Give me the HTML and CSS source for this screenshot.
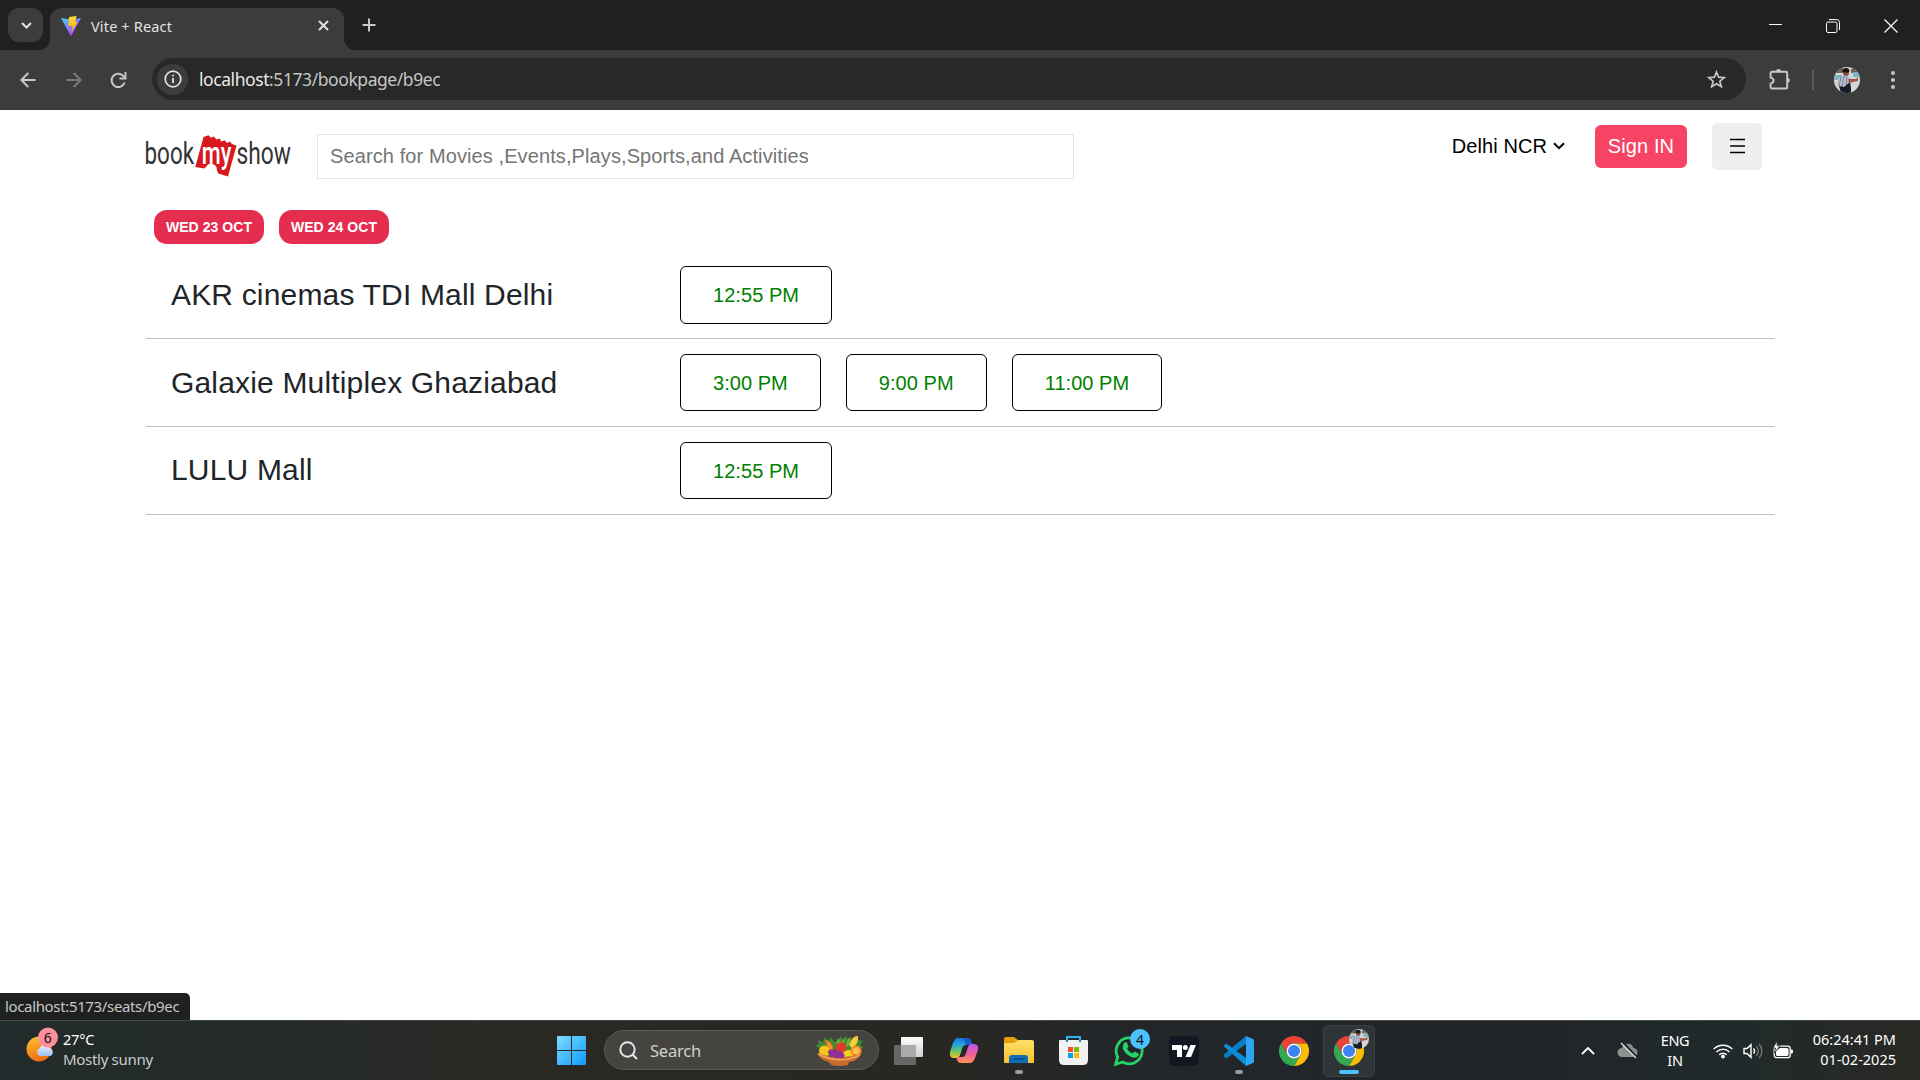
FILE: index.html
```html
<!DOCTYPE html>
<html lang="en">
<head>
<meta charset="utf-8">
<title>Vite + React</title>
<link rel="stylesheet" href="styles.css">
</head>
<body>
<svg class="defs" width="0" height="0" aria-hidden="true">
  <defs>
    <linearGradient id="sky" x1="0" y1="0" x2="1" y2="1"><stop offset="0" stop-color="#7ddcff"/><stop offset="1" stop-color="#0f9bff"/></linearGradient>
    <linearGradient id="vite" x1="0" y1="0" x2=".8" y2="1"><stop offset="0" stop-color="#41d1ff"/><stop offset="1" stop-color="#bd34fe"/></linearGradient>
    <linearGradient id="bolt" x1="0" y1="0" x2="0" y2="1"><stop offset="0" stop-color="#ffdd35"/><stop offset="1" stop-color="#ffa800"/></linearGradient>
    <linearGradient id="sun" x1=".2" y1="0" x2=".5" y2="1"><stop offset="0" stop-color="#fbc02f"/><stop offset="1" stop-color="#ee6a12"/></linearGradient>
    <linearGradient id="cloud" x1="0" y1="0" x2="0" y2="1"><stop offset="0" stop-color="#eaf2ff"/><stop offset="1" stop-color="#9dbcf0"/></linearGradient>
    <linearGradient id="folder" x1="0" y1="0" x2="0" y2="1"><stop offset="0" stop-color="#ffdf6b"/><stop offset="1" stop-color="#f9c12d"/></linearGradient>
    <linearGradient id="copA" x1="0" y1="0" x2="0" y2="1"><stop offset="0" stop-color="#1b78e8"/><stop offset=".35" stop-color="#26a8d8"/><stop offset=".7" stop-color="#7cc653"/><stop offset="1" stop-color="#f6c52c"/></linearGradient>
    <linearGradient id="copB" x1="0" y1="0" x2="0" y2="1"><stop offset="0" stop-color="#b35df0"/><stop offset=".5" stop-color="#ee5a9c"/><stop offset="1" stop-color="#ff9552"/></linearGradient>
    <linearGradient id="pane" x1="0" y1="0" x2="0" y2="1"><stop offset="0" stop-color="#fff"/><stop offset="1" stop-color="#cfcfcf"/></linearGradient>
    <symbol id="chrome" viewBox="0 0 48 48">
      <path fill="#ea4335" d="M24 0a24 24 0 0 1 20.800 12H24a12 12 0 0 0-10.400 18L3.200 12A24 24 0 0 1 24 0z"/>
      <path fill="#fbbc04" d="M44.800 12A24 24 0 0 1 24 48l10.400-18A12 12 0 0 0 24 12z"/>
      <path fill="#34a853" d="M3.200 12l10.400 18a12 12 0 0 0 20.800 0L24 48A24 24 0 0 1 3.200 12z"/>
      <circle cx="24" cy="24" r="12" fill="#fff"/><circle cx="24" cy="24" r="9.600" fill="#3b82f3"/>
    </symbol>
    <symbol id="face" viewBox="0 0 26 26">
      <clipPath id="round"><circle cx="13" cy="13" r="13"/></clipPath>
      <g clip-path="url(#round)">
        <rect width="26" height="26" fill="#d5d6d2"/>
        <path fill="#71604f" d="M0 0h9v6H0zM17 2h6v4h-6z"/><path fill="#7fb3c8" d="M0 8h8v5H0zM19 5h7v5h-7z"/>
        <path fill="#b9bfcf" d="M5 11l6-3 6 3-1 8-9 3-4-4z"/><path stroke="#5d6072" stroke-width=".7" d="M7 10l-2 9M10 9l-2 11M13 10l-1 9" fill="none"/>
        <circle cx="12" cy="6" r="3" fill="#7c5145"/><path fill="#181619" d="M8.500 5a3 3 0 0 1 7-1l-1 1.500-4 0z"/>
        <path fill="#a4574a" d="M14 12l8 0 2-2v4l-9 2z"/><path fill="#171c29" d="M5 19l5 1 6-5 1 6 0 5H7z"/>
      </g>
    </symbol>
  </defs>
</svg>
<div class="screen">
  <header class="tabstrip">
    <div class="tab-search"><svg width="11" height="7" viewBox="0 0 11 7"><path d="M1 1l4.500 4.500L10 1" fill="none" stroke="#e3e3e3" stroke-width="2"/></svg></div>
    <div class="tab">
      <svg width="20" height="20" viewBox="0 0 20 20"><path fill="url(#vite)" d="M0 2l10 1.500L20 2 10.500 19.500q-.5.800-1 0z"/><path fill="url(#bolt)" d="M8 1l7.500-1-1.500 6h2.500L10.500 16l1-6H7.300z"/></svg>
      <span class="tab-title">Vite + React</span>
      <svg class="tab-close" width="11" height="11" viewBox="0 0 11 11"><path d="M1 1l9 9M10 1l-9 9" stroke="#e3e3e3" stroke-width="2"/></svg>
    </div>
    <svg class="new-tab" width="14" height="14" viewBox="0 0 14 14"><path d="M7 .5v13M.5 7h13" stroke="#c7c7c7" stroke-width="2"/></svg>
    <div class="window-controls">
      <svg width="13" height="13" viewBox="0 0 13 13"><path d="M0 5.500h13" stroke="#fff"/></svg>
      <svg width="14" height="14" viewBox="0 0 14 14"><g fill="none" stroke="#fff"><rect x=".5" y="3" width="10.500" height="10.500" rx="1.500"/><path d="M3 .5h7.500q3 0 3 3V11"/></g></svg>
      <svg width="14" height="14" viewBox="0 0 14 14"><path d="M.5.500l13 13M13.500.500l-13 13" stroke="#fff" stroke-width="1.200"/></svg>
    </div>
  </header>
  <div class="toolbar">
    <svg class="nav-back" width="16" height="16" viewBox="0 0 16 16"><path d="M15.500 8H2M8.300 1L1.400 8l6.900 7" fill="none" stroke="#c7c7c7" stroke-width="2"/></svg>
    <svg class="nav-forward" width="16" height="16" viewBox="0 0 16 16"><path d="M.5 8H14M7.700 1l6.900 7-6.900 7" fill="none" stroke="#7a7a7a" stroke-width="2"/></svg>
    <svg class="nav-reload" width="17" height="17" viewBox="0 0 17 17"><path d="M14.600 10.500A6.700 6.700 0 1 1 13 3.600L14.500 5.500" fill="none" stroke="#c7c7c7" stroke-width="2"/><path d="M15.500 0v6.500H9.500" fill="none" stroke="#c7c7c7" stroke-width="2"/></svg>
    <div class="omnibox">
      <span class="site-info"><svg width="18" height="18" viewBox="0 0 18 18"><circle cx="9" cy="9" r="7.800" fill="none" stroke="#e3e3e3" stroke-width="1.700"/><path d="M9 8v5M9 4.800v1.800" stroke="#e3e3e3" stroke-width="1.800"/></svg></span>
      <span class="url"><b>localhost</b>:5173/bookpage/b9ec</span>
      <svg class="star" width="19" height="19" viewBox="0 0 19 19"><path d="M9.500 2l2.100 5.200 5.600.4-4.300 3.600 1.400 5.500-4.800-3-4.800 3 1.400-5.500L1.800 7.600l5.600-.4z" fill="none" stroke="#c7c7c7" stroke-width="1.700"/></svg>
    </div>
    <svg class="puzzle" width="21" height="21" viewBox="0 0 21 21"><path d="M2.800 2.800H17a1.200 1.200 0 0 1 1.200 1.200v14.200a1.200 1.200 0 0 1-1.200 1.200H2.800a1.200 1.200 0 0 1-1.200-1.200v-3.600q3-.8 3-3t-3-3V4a1.200 1.200 0 0 1 1.200-1.200z" fill="none" stroke="#c7c7c7" stroke-width="2"/><path d="M7 2.500a2.600 2.600 0 0 1 5.200 0M18.300 9a2.500 2.500 0 0 1 0 5" fill="#c7c7c7"/></svg>
    <i class="divider"></i>
    <svg class="avatar" width="26" height="26"><use href="#face"/></svg>
    <svg class="kebab" width="4" height="18" viewBox="0 0 4 18"><g fill="#c7c7c7"><circle cx="2" cy="2" r="2"/><circle cx="2" cy="9" r="2"/><circle cx="2" cy="16" r="2"/></g></svg>
  </div>

  <main class="page">
    <nav class="site-nav">
      <svg class="logo" width="148" height="44" viewBox="0 0 148 44">
        <g class="logo-text"><text transform="translate(-.5 29.300) scale(.724 1)">book</text><text transform="translate(91.500 29.300) scale(.735 1)">show</text></g>
        <path fill="#d71a20" d="M58.500 2l5-1.800 2.500 2.600 3-1.400 2.300 3.200 3.200-1 2 2.800 3.400-1.200 2 2.800 3.200-1.600 1.800 2.600 4.600 1.400-8.500 31-9.800-3-1.300-3.500q0-5-4.500-6t-6 2.500l-2.200 2L50.300 32z"/>
        <text class="logo-my" transform="translate(56.800 29) scale(.7 1)">my</text>
      </svg>
      <div class="search-box">Search for Movies ,Events,Plays,Sports,and Activities</div>
      <div class="nav-actions">
        <span class="city">Delhi NCR<svg width="12" height="8" viewBox="0 0 12 8"><path d="M1 1.200l5 5 5-5" fill="none" stroke="#000" stroke-width="2"/></svg></span>
        <span class="sign-in">Sign IN</span>
        <span class="menu"><svg width="15" height="15" viewBox="0 0 15 15"><path d="M0 .5h15M0 7h15M0 13.500h15" stroke="#000" stroke-width="1.400"/></svg></span>
      </div>
    </nav>
    <div class="dates"><span class="date">WED 23 OCT</span><span class="date">WED 24 OCT</span></div>
    <section class="theatres">
      <div class="theatre"><h2>AKR cinemas TDI Mall Delhi</h2><div class="times"><span class="time">12:55 PM</span></div></div>
      <div class="theatre"><h2>Galaxie Multiplex Ghaziabad</h2><div class="times"><span class="time">3:00 PM</span><span class="time">9:00 PM</span><span class="time">11:00 PM</span></div></div>
      <div class="theatre"><h2>LULU Mall</h2><div class="times"><span class="time">12:55 PM</span></div></div>
    </section>
    <div class="link-status">localhost:5173/seats/b9ec</div>
  </main>

  <footer class="taskbar">
    <div class="weather">
      <svg width="34" height="36" viewBox="0 0 34 36"><circle cx="13" cy="22" r="12.500" fill="url(#sun)"/><path fill="url(#cloud)" d="M14 29a4 4 0 0 1-.5-7.500 5.500 5.500 0 0 1 10-.5 4.300 4.300 0 0 1 1 8z"/><circle cx="22" cy="10.500" r="10" fill="#ff8f9c"/><text class="badge-text" x="21.800" y="16">6</text></svg>
      <div class="weather-text"><span>27°C</span><small>Mostly sunny</small></div>
    </div>
    <div class="apps">
      <span class="app"><svg width="29" height="29" viewBox="0 0 29 29"><path fill="url(#sky)" d="M1 0h13v14H0V1q0-1 1-1zM15 0h13q1 0 1 1v13H15zM0 15h14v14H1q-1 0-1-1zM15 15h14v13q0 1-1 1H15z"/></svg></span>
      <div class="task-search">
        <svg width="19" height="19" viewBox="0 0 19 19"><circle cx="8.500" cy="8.500" r="7.200" fill="none" stroke="#e6e6ea" stroke-width="2"/><path d="M13.500 13.500l4.500 4.500" stroke="#e6e6ea" stroke-width="2.200"/></svg>
        <span>Search</span>
        <svg class="basket" width="50" height="31" viewBox="0 0 50 31">
          <path fill="#3d8c34" d="M4 12l-3-1 4-2-1-4 5 2 2-5 3 4 3-4 3 5 4-1 3-5 2 5 3-5 3 5 6-4 3 3 5 1-3 4 3 2-4 4-6 5H8z"/>
          <path fill="#72ad3e" d="M22 8l2-5 3 4 4-5-1 7-6 2z"/>
          <path fill="#f07a1e" d="M11 5q5 0 8 7l-1 5q-6-5-7-12z"/><path fill="#f9a03c" d="M13 6q3 2 5 7l-1 1q-3-4-4-8z"/><path fill="#f4cf3c" d="M44 1q-6 0-9 9l3 3q7-4 6-12z"/><path fill="#72ad3e" d="M32 11q0-7 5-9-1 6-3 10z"/>
          <circle cx="27" cy="12.500" r="5.500" fill="#dc3e2c"/><circle cx="10.500" cy="16" r="5.500" fill="#f9c51d"/><path fill="#f7d023" d="M29 18q4-5 9-2l1 6H29z"/><circle cx="42" cy="16" r="5.500" fill="#fa8d1b"/><circle cx="42" cy="16" r="3.300" fill="#ffbd55"/>
          <path fill="#c96b2c" d="M3 18q22 8 44 1-3 7-12 8l-1 3q-9 2-17 0l-2-3Q6 25 3 18z"/>
          <g fill="#942d9a"><circle cx="16.500" cy="17" r="2.500"/><circle cx="21" cy="16.500" r="2.500"/><circle cx="25.500" cy="18" r="2.500"/><circle cx="18.500" cy="20" r="2.500"/><circle cx="23" cy="21" r="2.500"/><circle cx="28" cy="20.500" r="2.500"/></g>
          <path d="M4 19q21 11 42 1" stroke="#eda55a" stroke-width="1.500" fill="none"/>
        </svg>
      </div>
      <span class="app task-view"><svg width="30" height="28" viewBox="0 0 30 28"><rect x="8" width="22" height="20" rx="1" fill="url(#pane)"/><rect x="1" y="8" width="22" height="20" rx="1" fill="#777" fill-opacity=".8"/><path fill="#aaa" d="M8 8h15v12H8z"/></svg></span>
      <span class="app"><svg width="28" height="25" viewBox="0 0 28 25"><path fill="url(#copA)" d="M8 0h9q3 0 4 3l1 4h-6q-3 0-4 4l-2 6q-1 3-4 3H4q-5 0-4-6L3 5q2-5 5-5z"/><path fill="#175cc7" d="M12 0h5q3 0 4 3l1 4h-6q-2-6-4-7z"/><path fill="url(#copB)" d="M20 25h-9q-3 0-4-3l-1-3h6q3 0 4-4l2-6q1-3 4-3h2q5 0 4 6l-3 8q-2 5-5 5z"/></svg></span>
      <span class="app running"><svg width="30" height="27" viewBox="0 0 30 27"><path fill="#e3a008" d="M0 2q0-2 2-2h8l4 3-3 4H0z"/><path fill="url(#folder)" d="M0 6h10l4-3h14q2 0 2 2v20q0 1-1 1H1q-1 0-1-1z"/><path fill="#0f6cb8" d="M5 26v-5q0-3 3-3h13q3 0 3 3v5z"/><path d="M9.500 22h11" stroke="#073f75" stroke-width="1.200"/></svg></span>
      <span class="app"><svg width="29" height="29" viewBox="0 0 29 29"><path d="M8 6V1h13v5" fill="none" stroke="#33b1ea" stroke-width="2"/><path fill="#f1f1f1" d="M0 5q0-1 1-1h27q1 0 1 1v19q0 5-5 5H5q-5 0-5-5z"/><path d="M8 4v2M21 4v2" stroke="#1689c9" stroke-width="2"/><path fill="#f25022" d="M9 11h5v5H9z"/><path fill="#7fba00" d="M15 11h5v5h-5z"/><path fill="#00a4ef" d="M9 17h5v5H9z"/><path fill="#ffb900" d="M15 17h5v5h-5z"/></svg></span>
      <span class="app"><svg class="whatsapp" width="38" height="38" viewBox="0 0 38 38"><path d="M4.600 35.300L6.700 28A13 13 0 1 1 11.500 33z" fill="none" stroke="#25d366" stroke-width="2.800"/><path fill="#25d366" d="M13 14q2-2 3 0l1.500 3.500-1.500 2q2 3.500 5.500 5l2-2 4 2q1 .5 0 2-2.500 3.500-7 1.500-6-2.500-8.500-8Q11 17 13 14z"/><circle cx="29" cy="10" r="10" fill="#4cc2ff"/><text class="badge-text" x="29" y="15.500">4</text></svg></span>
      <span class="app"><svg width="30" height="30" viewBox="0 0 30 30"><rect width="30" height="30" rx="5" fill="#131722"/><g fill="#fff"><path d="M3 9h10v12H8v-7H3z"/><circle cx="16.300" cy="11.500" r="2.500"/><path d="M21.500 9H27l-5 12h-5.500z"/></g></svg></span>
      <span class="app running"><svg width="30" height="30" viewBox="0 0 30 30"><path fill="#0a7cc6" d="M22 0L3.500 17.500.4 20q-.8-.8 0-2L22 0z M22 0v8L3 22q-.8.600-1.600 0L.3 20.800q-.6-1 .3-1.800z"/><path fill="#0b8ed8" d="M22 30v-8L3 8q-.8-.6-1.600 0L.3 9.200q-.6 1 .3 1.800z"/><path fill="#2aa6f2" d="M22 0l7 3q1 .5 1 1.500v21q0 1-1 1.500l-7 3z"/></svg></span>
      <span class="app"><svg width="30" height="30"><use href="#chrome"/></svg></span>
      <span class="app active"><svg width="30" height="30"><use href="#chrome"/></svg><svg class="profile-badge" width="20" height="20"><use href="#face" width="20" height="20"/></svg></span>
    </div>
    <div class="tray">
      <svg class="t-chev" width="14" height="9" viewBox="0 0 14 9"><path d="M1 8l6-6 6 6" fill="none" stroke="#fff" stroke-width="1.800"/></svg>
      <svg class="t-cloud" width="20" height="17" viewBox="0 0 20 17"><path fill="#8d8f90" d="M4 15a4.300 4.300 0 0 1 0-9 6 6 0 0 1 11.500 0 4.600 4.600 0 0 1 .5 9z"/><path d="M4 0l15 16" stroke="#202426" stroke-width="3"/><path d="M3 1l15 15" stroke="#eee" stroke-width="1.300"/></svg>
      <span class="lang">ENG<br>IN</span>
      <svg class="t-wifi" width="20" height="16" viewBox="0 0 20 16"><g fill="none" stroke="#fff" stroke-width="1.400"><path d="M.7 6a13.300 13.300 0 0 1 18.600 0M3.500 9a9.200 9.200 0 0 1 13 0M6.200 11.800a5.400 5.400 0 0 1 7.600 0"/></g><circle cx="10" cy="13.500" r="2" fill="#fff"/></svg>
      <svg class="t-vol" width="20" height="16" viewBox="0 0 20 16"><g fill="none" stroke-width="1.400"><path stroke="#fff" d="M1 5.500h3L8 1.700v12.600l-4-3.800H1zM10.500 5.500a3.500 3.500 0 0 1 0 5"/><path stroke="#747778" d="M13.200 3a7 7 0 0 1 0 10M16 1a10 10 0 0 1 0 14"/></g></svg>
      <svg class="t-batt" width="20" height="17" viewBox="0 0 20 17"><rect x="1.200" y="4.200" width="16" height="11.500" rx="2.500" fill="none" stroke="#fff" stroke-width="1.300"/><path fill="#fff" d="M3 9l4-3h7q1.500 0 1.500 1.500v5q0 1.500-1.500 1.500H4.500Q3 14 3 12.500zM18 7.500h1q1 0 1 2t-1 2h-1z"/><path fill="#fff" stroke="#20282a" stroke-width=".8" d="M4-1L0 6h2.500L1.500 11 7 4H4.200z"/></svg>
      <span class="clock">06:24:41 PM<br>01-02-2025</span>
    </div>
  </footer>
</div>
</body>
</html>
```
FILE: styles.css
```css
* { box-sizing: border-box; }
body { margin: 0; overflow: hidden; font-family: "Liberation Sans", Arial, sans-serif; }
svg { display: block; flex: none; overflow: visible; }
.defs { position: absolute; }
.screen { width: 1920px; height: 1080px; display: flex; flex-direction: column; background: #fff; }

.tabstrip { height: 50px; background: #1f2120; display: flex; align-items: flex-start; padding-left: 8px; font-family: "Noto Sans", sans-serif; }
.tab-search { width: 35px; height: 34px; margin-top: 8px; border-radius: 11px; background: #3c3c3c; display: grid; place-items: center; }
.tab-search svg { margin-left: 1px; }
.tab { position: relative; width: 294px; height: 42px; margin: 8px 0 0 7px; padding: 0 15px 6px 11px; border-radius: 12px 12px 0 0; background: #3c3c3c; display: flex; align-items: center; color: #e3e3e3; }
.tab::before, .tab::after { content: ""; position: absolute; bottom: 0; width: 12px; height: 12px; }
.tab::before { left: -12px; background: radial-gradient(circle at 0 0, transparent 12px, #3c3c3c 12.5px); }
.tab::after { right: -12px; background: radial-gradient(circle at 100% 0, transparent 12px, #3c3c3c 12.5px); }
.tab-title { margin: 0 0 0 10px; font-size: 14.5px; letter-spacing: 0.15px; }
.tab-close { margin-left: auto; margin-top: -1px; }
.new-tab { margin: 18px 0 0 18px; }
.window-controls { display: flex; gap: 44px; margin: 19px 22px 0 auto; }

.toolbar { height: 60px; background: #3c3c3c; display: flex; align-items: center; padding-left: 20px; font-family: "Noto Sans", sans-serif; }
.nav-forward { margin-left: 30px; }
.nav-reload { margin-left: 28px; }
.omnibox { width: 1594px; height: 42px; margin: -2px 0 0 25px; padding: 0 20px 0 5px; border-radius: 21px; background: #282828; display: flex; align-items: center; }
.site-info { width: 31px; height: 31px; border-radius: 50%; background: #3c3c3c; display: grid; place-items: center; }
.url { margin-left: 11px; font-size: 17.5px; letter-spacing: -0.43px; color: #c4c7c5; }
.url b { font-weight: 400; color: #e9e9e9; }
.star { margin-left: auto; }
.puzzle { margin: -2px 0 0 23px; }
.divider { width: 2px; height: 20px; margin-left: 22px; background: #5b5b5b; }
.avatar { margin-left: 20px; }
.kebab { margin-left: 31px; }

.page { position: relative; height: 910px; padding: 0 145px 0 146px; display: flex; flex-direction: column; }
.site-nav { display: flex; align-items: flex-start; height: 100px; }
.logo { margin-top: 25px; margin-left: -1px; }
.logo-text { font-family: Roboto, sans-serif; font-size: 31px; fill: #333; }
.logo-my { font-family: Roboto, sans-serif; font-weight: 500; font-size: 31px; fill: #fff; }
.search-box { width: 757px; height: 45px; margin: 24px 0 0 24px; padding-left: 12px; border: 1px solid #e6e6e6; line-height: 43px; font-size: 20px; letter-spacing: 0.1px; color: #757575; white-space: nowrap; }
.nav-actions { display: flex; align-items: flex-start; margin: 13px 13px 0 auto; font-size: 20px; }
.city { display: flex; align-items: center; gap: 6px; margin: 2px 30px 0 0; height: 42px; color: #000; letter-spacing: 0.08px; }
.sign-in { width: 92px; height: 43px; margin: 2px 25px 0 0; border-radius: 6px; background: #f84464; color: #fff; line-height: 42px; text-align: center; letter-spacing: 0.1px; }
.menu { width: 50px; height: 47px; border-radius: 5px; background: #efefef; display: grid; place-items: center; }
.dates { display: flex; gap: 15px; padding-left: 8px; height: 41px; }
.date { width: 110px; height: 34px; border-radius: 13px; background: #e52d50; color: #fff; font-size: 14px; font-weight: 700; line-height: 34px; text-align: center; letter-spacing: 0.05px; }
.theatre { height: 88px; padding-left: 25px; display: flex; align-items: center; border-bottom: 1px solid #bfbfbf; }
.theatre h2 { width: 509px; margin: 0; font-size: 30px; font-weight: 400; letter-spacing: 0.17px; color: #212529; white-space: nowrap; }
.times { display: flex; gap: 25px; }
.time { height: 58px; padding: 0 32px; border: 1px solid #000; border-radius: 6px; color: green; font-size: 20px; line-height: 56px; letter-spacing: 0.05px; white-space: nowrap; }
.theatre + .theatre .time { height: 57px; margin-bottom: 1px; }
.theatre:last-child h2 { margin-bottom: 2px; }
.link-status { position: absolute; left: 0; bottom: 0; width: 190px; height: 27px; padding-left: 5px; border-radius: 0 5px 0 0; background: #1f2120; color: #c7c7c7; font: 15px/27px "Noto Sans", sans-serif; letter-spacing: -0.35px; white-space: nowrap; }

.taskbar { height: 60px; border-top: 1px solid #454b4a; background: linear-gradient(90deg, #222b2b 0, #242a29 15%, #2a2823 28%, #292722 48%, #252728 55%, #21262b 66%, #222528 80%, #202a2b 90%, #292824 100%); display: grid; grid-template-columns: 544px 833px 543px; color: #fff; font-family: "Noto Sans", sans-serif; }
.weather { display: flex; padding: 6px 0 0 26px; gap: 3px; }
.weather-text { display: flex; flex-direction: column; margin-top: 2px; line-height: 20px; font-size: 14.5px; letter-spacing: -0.2px; }
.weather-text small { font-size: 15px; letter-spacing: -0.3px; color: #c9cccc; }
.badge-text { font-size: 14px; fill: #111; text-anchor: middle; }
.apps { display: flex; align-items: center; }
.app { position: relative; width: 55px; height: 59px; display: grid; place-items: center; }
.app:first-child { margin-right: 5px; }
.task-view svg { margin-left: -2px; }
.whatsapp { margin: -6px 0 0 2px; }
.running::after, .active::after { content: ""; position: absolute; bottom: 6px; left: 24px; width: 8px; height: 4px; border-radius: 2px; background: #989a9c; }
.active::after { left: 18px; bottom: 6px; width: 20px; background: #4cc2ff; }
.active::before { content: ""; position: absolute; left: 2px; top: 4px; width: 50px; height: 50px; border: 1px solid #3b3f44; border-radius: 5px; background: #2f3439; }
.active svg { position: relative; }
.active .profile-badge { position: absolute; left: 28px; top: 8px; }
.task-search { width: 275px; height: 40px; margin: -1px 2px 0 0; padding: 0 14px; border: 1px solid #5c5954; border-radius: 20px; background: #454440; display: flex; align-items: center; gap: 12px; color: #d2d1cf; font-size: 16.5px; letter-spacing: -0.2px; }
.basket { margin-left: auto; }
.tray { display: flex; align-items: center; padding-left: 204px; font-size: 14.5px; line-height: 20px; }
.t-cloud { margin-left: 23px; }
.lang { width: 40px; margin: -2px 0 0 17px; text-align: center; letter-spacing: -0.3px; }
.t-wifi { margin-left: 18px; }
.t-vol { margin-left: 10px; }
.t-batt { margin-left: 10px; }
.clock { margin: -3px 24px 0 auto; text-align: right; letter-spacing: 0; white-space: nowrap; }
```
